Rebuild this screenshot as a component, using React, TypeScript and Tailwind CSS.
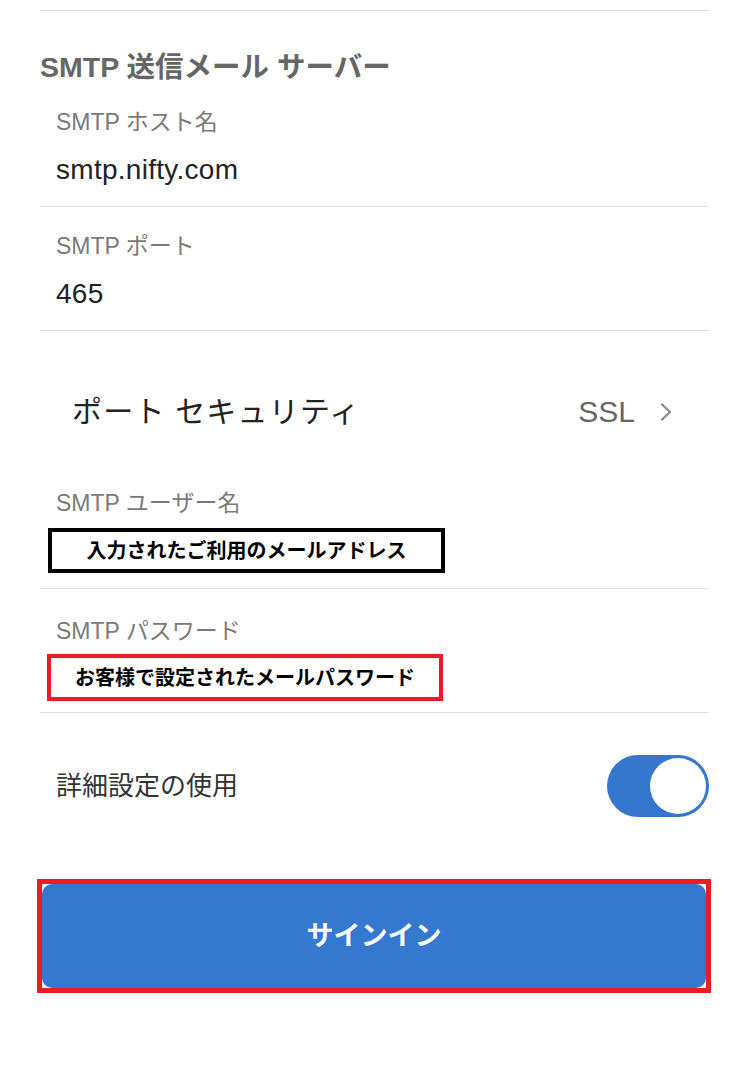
const font = "font-['Liberation_Sans','Noto_Sans_CJK_JP',sans-serif]";

function Field({ label, value }: { label: string; value: string }) {
  return (
    <div className="border-b border-[#e0e0e0] pl-[16px] pt-[28px] pb-[23px]">
      <div className="text-[23px] leading-[22px] text-[#7a7a7a]">{label}</div>
      <div className="mt-[24px] text-[28px] leading-[26px] tracking-[0.01em] text-[#222]">{value}</div>
    </div>
  );
}

export default function App() {
  return (
    <div className={`${font} min-h-[1067px] bg-white`}>
      <div className="ml-[40px] w-[669px]">
        <div className="h-[10px]" />
        <div className="border-t border-[#e0e0e0]" />

        <h2 className="pt-[42px] pb-[2px] text-[28.5px] font-bold leading-[28px] text-[#666]">
          SMTP 送信メール サーバー
        </h2>

        <Field label="SMTP ホスト名" value="smtp.nifty.com" />
        <Field label="SMTP ポート" value="465" />

        <div className="flex h-[133px] items-start justify-between pl-[32px] pr-[36px] pt-[66px]">
          <span className="text-[30px] leading-[30px] tracking-[0.04em] text-[#222]">ポート セキュリティ</span>
          <span className="flex items-center gap-[24px] text-[30px] leading-[30px] text-[#666]">
            SSL
            <svg width="14" height="18" viewBox="0 0 14 18" fill="none">
              <path d="M3 1.5 L11 9 L3 16.5" stroke="#888" strokeWidth="2.2" strokeLinecap="round" strokeLinejoin="round" />
            </svg>
          </span>
        </div>

        <div className="border-b border-[#e0e0e0] pt-[28px] pb-[15px]">
          <div className="pl-[16px] text-[23px] leading-[22px] text-[#7a7a7a]">SMTP ユーザー名</div>
          <div className="ml-[8px] mt-[14px] flex h-[45px] w-[397px] items-center justify-center border-[4px] border-black text-[20px] font-bold text-black">
            入力されたご利用のメールアドレス
          </div>
        </div>

        <div className="border-b border-[#e0e0e0] pt-[31px] pb-[11px]">
          <div className="pl-[16px] text-[23px] leading-[22px] text-[#7a7a7a]">SMTP パスワード</div>
          <div className="ml-[7px] mt-[12px] flex h-[47px] w-[396px] items-center justify-center border-[4px] border-[#ed1c24] text-[20px] font-bold text-black">
            お客様で設定されたメールパスワード
          </div>
        </div>

        <div className="flex items-center justify-between pl-[16px] pt-[42px]">
          <span className="text-[26px] leading-[26px] text-[#333]">詳細設定の使用</span>
          <div className="relative h-[62px] w-[102px] rounded-full bg-[#3577ce]">
            <div className="absolute right-[3px] top-[3px] h-[56px] w-[56px] rounded-full bg-white" />
          </div>
        </div>

        <div className="-ml-[3px] mt-[62px] h-[114px] w-[674px] border-[5px] border-[#ed1c24]">
          <div className="flex h-full w-full items-center justify-center rounded-[10px] bg-[#3578cf] text-[27px] font-bold text-white">
            サインイン
          </div>
        </div>
      </div>
    </div>
  );
}
